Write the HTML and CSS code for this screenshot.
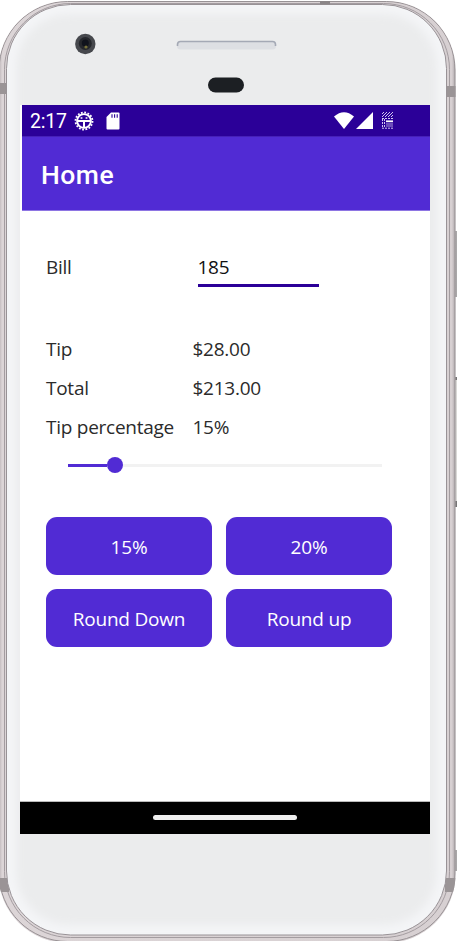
FILE: index.html
```html
<!DOCTYPE html>
<html lang="en">
<head>
<meta charset="utf-8">
<title>Home</title>
<link rel="stylesheet" href="styles.css">
</head>
<body>
<div class="device">
  <svg class="shell" viewBox="0 0 460 941" aria-hidden="true">
    <defs>
      <linearGradient id="metal" x1="0" x2="1" y1="0" y2="0">
        <stop offset="0" stop-color="#b5aeb1"/>
        <stop offset=".008" stop-color="#dcd5d7"/>
        <stop offset=".992" stop-color="#d7d0d2"/>
        <stop offset="1" stop-color="#aaa4a7"/>
      </linearGradient>
      <filter id="soft" x="-5%" y="-5%" width="110%" height="110%"><feGaussianBlur stdDeviation="4"/></filter>
      <clipPath id="edge"><rect x="-1.5" y="1" width="457" height="942" rx="69"/></clipPath>
    </defs>
    <g fill="#a9a7a8">
      <rect x="454" y="231" width="3" height="66"/>
      <rect x="454" y="377" width="3" height="130" fill="#d9d8d6"/>
      <rect x="454" y="377" width="3" height="3" fill="#777576"/>
      <rect x="454" y="501" width="3" height="6" fill="#777576"/>
      <rect x="454" y="850" width="3" height="21"/>
    </g>
    <rect x="-1.5" y="1" width="457" height="942" rx="69" fill="url(#metal)"/>
    <g clip-path="url(#edge)">
      <rect x="-1" y="1.5" width="456" height="940" rx="68.5" fill="none" stroke="#989295"/>
      <rect x="4.5" y="3.5" width="445" height="934" rx="66" fill="none" stroke="#a39ca0"/>
      <g fill="#9a9496">
        <rect x="320" y="1" width="10" height="4"/>
        <rect x="0" y="83" width="7" height="11"/>
        <rect x="446" y="86" width="10" height="11"/>
        <rect x="0" y="878" width="9" height="14"/>
        <rect x="445" y="878" width="11" height="14"/>
      </g>
    </g>
    <rect x="6.5" y="4.5" width="440" height="930.5" rx="64" fill="#f4f5f7" stroke="#989296"/>
    <rect x="16" y="14" width="421" height="911" rx="54" fill="#ebeced" filter="url(#soft)"/>
    <rect x="320" y="1" width="10" height="3.5" fill="#8b8688"/>
    <circle cx="85.3" cy="44" r="10.2" fill="#46484d"/>
    <circle cx="85.3" cy="43.5" r="6.5" fill="#25272c"/>
    <circle cx="85.3" cy="43" r="3.5" fill="#10131c"/>
    <circle cx="86" cy="47" r="1.6" fill="#77713a"/>
    <rect x="177" y="41" width="99" height="8.5" rx="3.5" fill="#dddfe3"/>
    <path d="M177.5 46v-1.5q0-3 3-3h92q3 0 3 3V46" fill="none" stroke="#a4a9b5" stroke-width="1.6"/>
    <rect x="208" y="77.5" width="36" height="15" rx="7.5" fill="#1c1f23"/>
  </svg>

  <main class="screen">
    <header class="status">
      <span class="clock">2:17</span>
      <svg class="gear" viewBox="0 0 20 20">
        <circle cx="10" cy="10" r="8.5" fill="none" stroke="#fff" stroke-width="1.8" stroke-dasharray="1.8 1.538"/>
        <circle cx="10" cy="10" r="6.9" fill="none" stroke="#fff" stroke-width="1.9"/>
        <path d="M3.5 10h13M10 10v7" stroke="#fff" stroke-width="2"/>
        <path d="M6.6 7h1.8M11.6 7h1.8" stroke="#fff" stroke-width="1.6"/>
      </svg>
      <svg class="card" viewBox="0 0 14 18">
        <path fill="#fff" d="M5 .5h7.5q1 0 1 1v15q0 1-1 1h-11q-1 0-1-1V5z"/>
        <path d="M6 2.2v3.5M8.6 2.2v3.5M11.2 2.2v3.5" stroke="#2b0098" stroke-width="1.1"/>
      </svg>
      <svg class="wifi" viewBox="0 0 20 17"><path fill="#fff" d="M0 4.5Q10-4 20 4.5L10 17z"/></svg>
      <svg class="signal" viewBox="0 0 17 17"><path fill="#fff" d="M17 0v17H0z"/></svg>
      <svg class="battery" viewBox="0 0 11 17">
        <g fill="none" stroke="#d0c4ee">
          <path d="M0 2l2-2M0 5l5-5M3 5l5-5M6 5l5-5M9 5l2-2"/>
          <path d="M0 6.5h11" stroke-dasharray="2 1"/>
          <path d="M.5 7v9M2.5 7v9" stroke-dasharray="2 1"/>
          <path d="M4 9.3h7" stroke="#fff" stroke-width="1.8"/>
          <path d="M4 12h7M4 14h7" stroke-width=".8"/>
          <path d="M0 16.2h11" stroke-dasharray="2 1"/>
        </g>
      </svg>
    </header>
    <div class="appbar"><h1>Home</h1></div>

    <section class="content">
      <div class="row bill"><label for="bill">Bill</label><input id="bill" type="text" value="185"></div>
      <div class="row"><span>Tip</span><span>$28.00</span></div>
      <div class="row"><span>Total</span><span>$213.00</span></div>
      <div class="row"><span>Tip percentage</span><span>15%</span></div>
      <div class="slider"><div class="filled"></div><div class="thumb"></div><div class="rest"></div></div>
      <div class="buttons">
        <button>15%</button><button>20%</button>
        <button>Round Down</button><button>Round up</button>
      </div>
    </section>

    <footer class="nav"><div class="pill"></div></footer>
  </main>
</div>
</body>
</html>
```
FILE: styles.css
```css
* { box-sizing: border-box; }
body {
  margin: 0;
  background: #fff;
  font-family: "Open Sans", sans-serif;
  overflow: hidden;
}
.device {
  position: relative;
  width: 460px;
  height: 941px;
  padding: 105px 30px 108px 20px;
}
.shell {
  position: absolute;
  inset: 0;
  width: 460px;
  height: 941px;
}
.screen {
  position: relative;
  display: flex;
  flex-direction: column;
  width: 410px;
  height: 729px;
  background: #fff;
}
.status {
  display: flex;
  align-items: center;
  height: 31px;
  margin-left: 2px;
  padding: 0 37px 0 8px;
  background: #2b0098;
  color: #fff;
}
.clock {
  width: 44px;
  padding-top: 2px;
  font: 400 19.5px/29px Roboto, sans-serif;
  letter-spacing: -.2px;
}
.gear { width: 20px; height: 20px; }
.card { width: 14px; height: 18px; margin-left: 12px; }
.wifi { width: 20px; height: 17px; margin-left: auto; }
.signal { width: 17px; height: 17px; margin-left: 2px; }
.battery { width: 11px; height: 17px; margin-left: 9px; }
.appbar {
  display: flex;
  align-items: center;
  height: 75px;
  margin-left: 2px;
  padding-left: 19px;
  background: #512bd4;
  border-top: 1px solid #4620b8;
  border-bottom: 1px solid #8e75e3;
}
.appbar h1 {
  margin: 2px 0 0;
  color: #fff;
  font: 500 26.5px/32px Roboto, sans-serif;
  letter-spacing: .5px;
}
.content {
  flex: 1;
  padding: 36px 38px 0 26px;
  color: #2b2b2b;
  font-size: 19px;
  letter-spacing: -.26px;
}
.row {
  display: grid;
  grid-template-columns: 146.5px 1fr;
  align-items: center;
  height: 39px;
}
.bill {
  height: 40px;
  margin-bottom: 42px;
  grid-template-columns: 151.5px 121px;
}
.bill input {
  width: 121px;
  height: 40px;
  padding: 2px 0 0;
  border: 0;
  border-bottom: 3px solid #2b0098;
  background: none;
  color: #111;
  font: inherit;
  letter-spacing: inherit;
  outline: 0;
}
.slider {
  display: flex;
  align-items: center;
  height: 16px;
  margin: 11px 10px 0 21.5px;
}
.filled { width: 39px; height: 3px; background: #512bd4; }
.thumb { width: 16px; height: 16px; border-radius: 50%; background: #512bd4; }
.rest { flex: 1; height: 3px; background: #f2f2f2; }
.buttons {
  display: grid;
  grid-template-columns: 1fr 1fr;
  grid-auto-rows: 58px;
  gap: 14px;
  margin-top: 44px;
}
.buttons button {
  padding: 2px 0 0;
  border: 0;
  border-radius: 11px;
  background: #512bd4;
  color: #fff;
  font: inherit;
  letter-spacing: -.2px;
}
.nav {
  display: flex;
  justify-content: center;
  height: 33px;
  padding-top: 13px;
  background: #000;
  border-top: 1px solid #bbb;
}
.pill { width: 144px; height: 5px; border-radius: 3px; background: #eee; }
```
